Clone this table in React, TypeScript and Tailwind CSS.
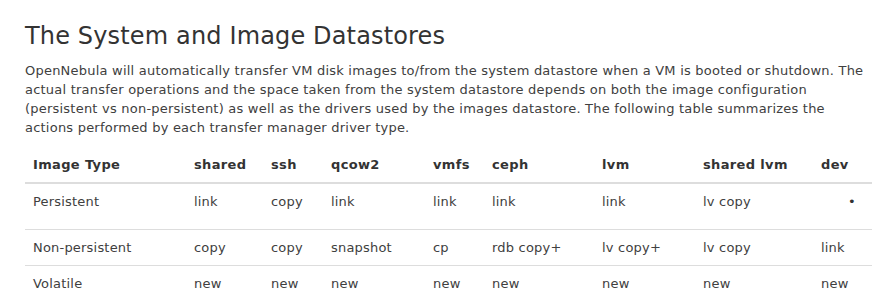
import React from "react";

const cols = [161, 77, 60, 102, 59, 110, 101, 118, 59];
const headers = ["Image Type", "shared", "ssh", "qcow2", "vmfs", "ceph", "lvm", "shared lvm", "dev"];
const rows: string[][] = [
  ["Persistent", "link", "copy", "link", "link", "link", "link", "lv copy", "•"],
  ["Non-persistent", "copy", "copy", "snapshot", "cp", "rdb copy+", "lv copy+", "lv copy", "link"],
  ["Volatile", "new", "new", "new", "new", "new", "new", "new", "new"],
];

export default function App() {
  return (
    <div
      className="w-[888px] h-[308px] overflow-hidden bg-white px-[25px] pt-[22px] text-[#404040]"
      style={{ fontFamily: '"DejaVu Sans", Verdana, sans-serif' }}
    >
      <h2 className="text-[24px] leading-[29px] font-normal text-[#333333] mb-[10px] tracking-[0.15px]">
        The System and Image Datastores
      </h2>
      <p className="text-[13px] leading-[19px] mb-[10px] w-[847px] tracking-[0.22px]">
        OpenNebula will automatically transfer VM disk images to/from the system datastore when a VM is booted or
        shutdown. The actual transfer operations and the space taken from the system datastore depends on both the
        image configuration (persistent vs non-persistent) as well as the drivers used by the images datastore. The
        following table summarizes the actions performed by each transfer manager driver type.
      </p>
      <table className="w-[847px] table-fixed border-collapse text-[13px] leading-[19px] tracking-[0.2px]">
        <colgroup>
          {cols.map((w, i) => (
            <col key={i} style={{ width: w }} />
          ))}
        </colgroup>
        <thead>
          <tr className="border-b-2 border-[#dddddd]">
            {headers.map((h) => (
              <th
                key={h}
                className="text-left font-bold px-[8px] pt-[8px] pb-[8px] align-bottom text-[#333333] tracking-[0.35px]"
              >
                {h}
              </th>
            ))}
          </tr>
        </thead>
        <tbody>
          {rows.map((r, ri) => (
            <tr key={ri} className={ri < rows.length - 1 ? "border-b border-[#dddddd]" : ""}>
              {r.map((c, ci) => (
                <td
                  key={ci}
                  className={`px-[8px] pt-[8px] align-top ${ri === 0 ? "pb-[18px]" : "pb-[8px]"}`}
                >
                  {c === "•" ? <div className="pl-[27px] text-[#333333]">•</div> : c}
                </td>
              ))}
            </tr>
          ))}
        </tbody>
      </table>
    </div>
  );
}
